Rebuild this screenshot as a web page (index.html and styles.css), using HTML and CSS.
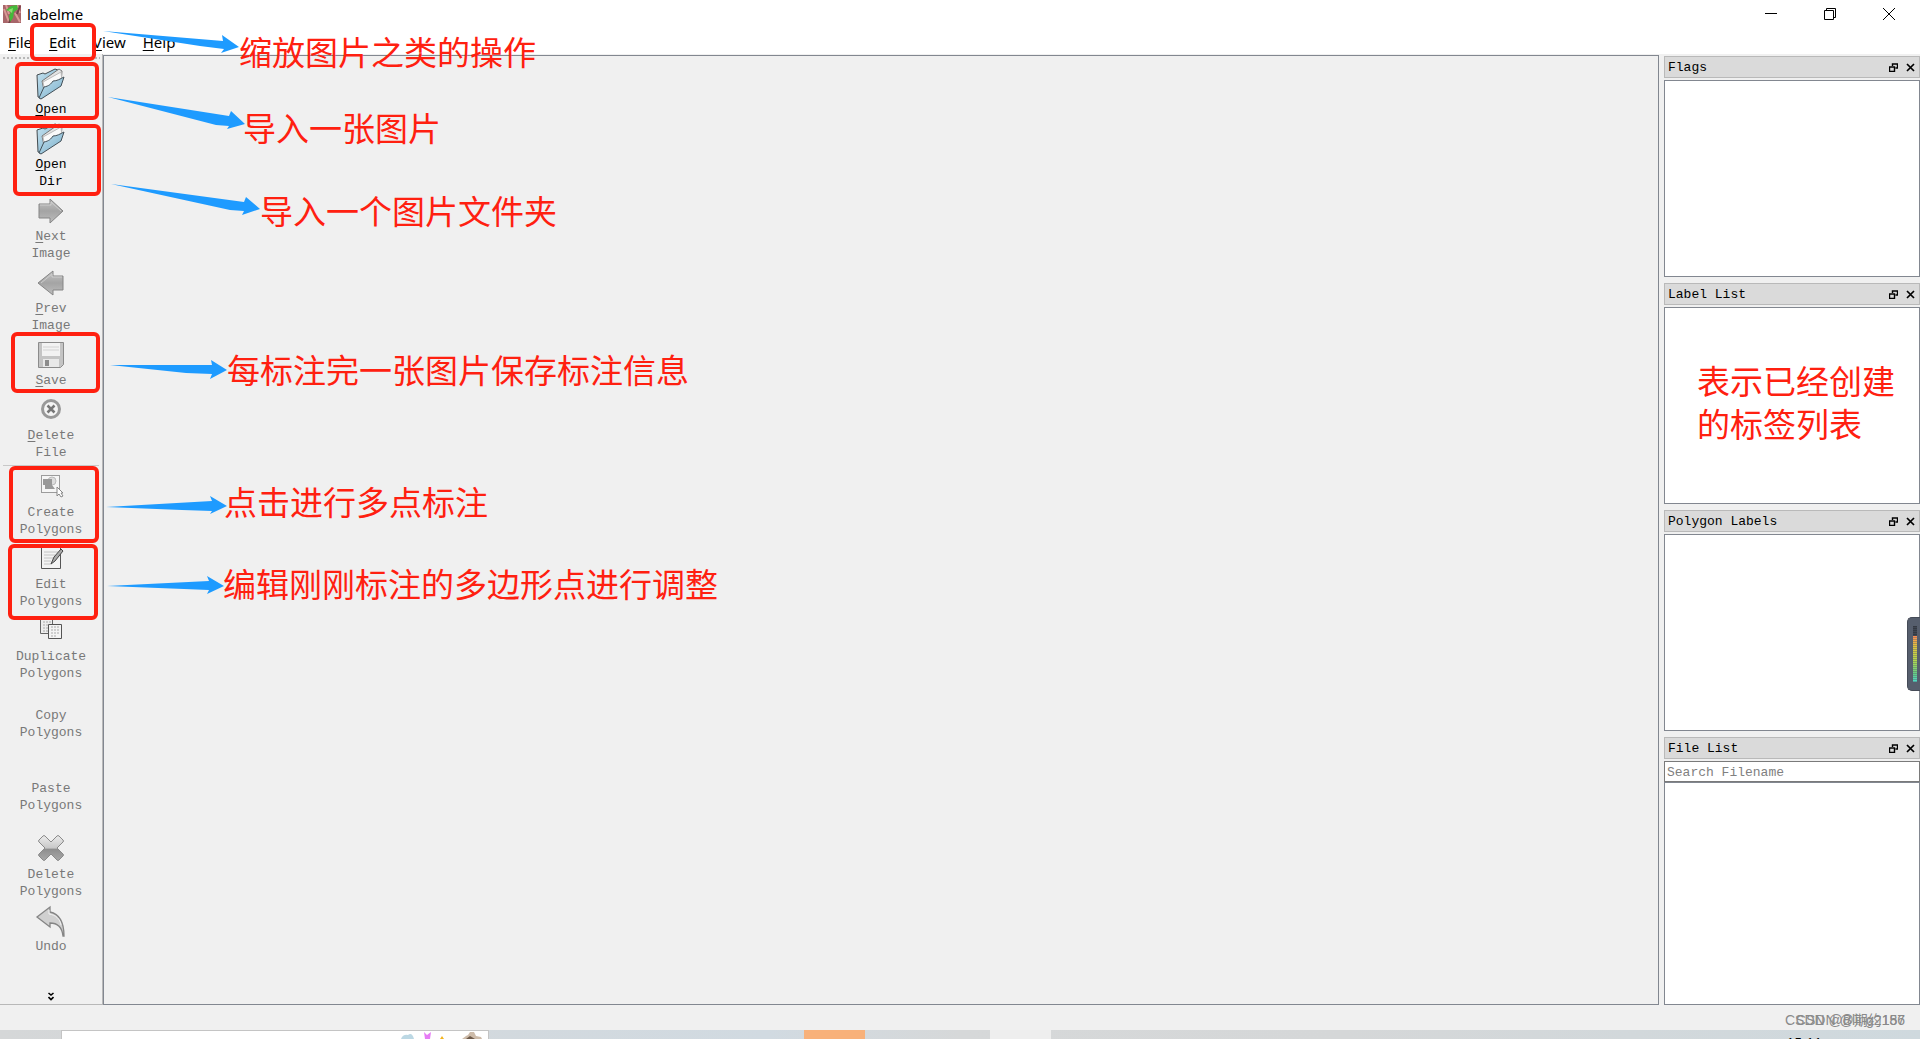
FILE: index.html
```html
<!DOCTYPE html>
<html lang="zh-CN">
<head>
<meta charset="utf-8">
<title>labelme</title>
<link rel="stylesheet" href="styles.css">
</head>
<body>
<svg class="defs" width="0" height="0" aria-hidden="true">
  <defs>
    <linearGradient id="blue" x1="0" y1="0" x2="1" y2="1"><stop offset="0" stop-color="#c9e4f1"/><stop offset="1" stop-color="#74acc8"/></linearGradient>
    <linearGradient id="gray" x1="0" y1="0" x2="0" y2="1"><stop offset="0" stop-color="#c6c6c6"/><stop offset=".5" stop-color="#a4a4a4"/><stop offset="1" stop-color="#bdbdbd"/></linearGradient>
    <linearGradient id="cross" x1="0" y1="0" x2="0" y2="1"><stop offset="0" stop-color="#ececec"/><stop offset=".5" stop-color="#c8c8c8"/><stop offset=".55" stop-color="#8e8e8e"/><stop offset="1" stop-color="#a8a8a8"/></linearGradient>
    <symbol id="folder" viewBox="0 0 32 32">
      <path d="M2 7l6-2 2 1L20 1l3 1-1 15L6 30l-3-1z" fill="url(#blue)" stroke="#444c50"/>
      <path d="M7 13L24 1l3 2-1 13-16 11z" fill="#e4e4e4" stroke="#777"/>
      <path d="M8 14L26 4l1 10-17 11z" fill="#fafafa" stroke="#bbb"/>
      <path d="M9 19c5-1 7-3 9-6 4 0 7-2 11-4l-3 9L6 31l-2-1z" fill="url(#blue)" stroke="#445058"/>
    </symbol>
    <symbol id="win-float" viewBox="0 0 9 9"><path d="M3.500 3V1h5v4H6.500M3 1h6M.5 4h5v4.500h-5zM0 4h6" fill="none" stroke="#000" stroke-width="1.400"/></symbol>
    <symbol id="win-close" viewBox="0 0 9 9"><path d="M1 1l7 7M8 1L1 8" stroke="#000" stroke-width="1.700"/></symbol>
  </defs>
</svg>

<header class="titlebar">
  <svg class="app-icon" viewBox="0 0 18 18"><path fill="#a8666a" d="M0 0h18v18H0z"/><path d="M1 4l5 13M3 0l3 9M12 8l5 9M14 0l3 8" stroke="#d99a95" stroke-width="2"/><path d="M9 10l-3 8M17 1l-3 8" stroke="#74404a" stroke-width="2"/><path d="M3 5l5-4 6-1 1 4-4 3-1 6-3 4-1-6 2-4z" fill="#45b83a"/><path d="M5 5l5-2-1 5z" fill="#8be071"/></svg>
  <span class="app-name">labelme</span>
  <div class="window-buttons">
    <button aria-label="Minimize"><svg viewBox="0 0 12 12"><path d="M0 5.500h12" stroke="#000"/></svg></button>
    <button aria-label="Restore"><svg viewBox="0 0 12 12"><path d="M.5 2.500h9v9h-9zM2.500 2.500v-2h9v9h-2" fill="none" stroke="#000"/></svg></button>
    <button aria-label="Close"><svg viewBox="0 0 12 12"><path d="M0 0l12 12M12 0L0 12" stroke="#000"/></svg></button>
  </div>
</header>

<nav class="menubar">
  <button><u>F</u>ile</button>
  <button><u>E</u>dit</button>
  <button><u>V</u>iew</button>
  <button><u>H</u>elp</button>
</nav>

<main class="workspace">
  <aside class="toolbar">
    <div class="handle"></div>
    <button class="tool"><svg viewBox="0 0 32 32"><use href="#folder"/></svg><span><u>O</u>pen</span></button>
    <button class="tool"><svg viewBox="0 0 32 32"><use href="#folder"/></svg><span><u>O</u>pen<br>Dir</span></button>
    <button class="tool" disabled><svg viewBox="0 0 32 32"><path d="M4 9h11V4l13 12-13 12v-5H4z" fill="url(#gray)" stroke="#858585"/><path d="M5 10h11V7l10 9" fill="none" stroke="#ccc"/></svg><span><u>N</u>ext<br>Image</span></button>
    <button class="tool" disabled><svg viewBox="0 0 32 32"><path d="M28 9H18V4L3 16l15 12v-5h10z" fill="url(#gray)" stroke="#858585"/><path d="M27 10H17V7L6 16" fill="none" stroke="#ccc"/></svg><span><u>P</u>rev<br>Image</span></button>
    <button class="tool" disabled><svg viewBox="0 0 32 32"><path d="M3.500 3.500h25v22l-3 3h-22z" fill="#c4c4c4" stroke="#8b8b8b"/><path d="M7 4h18v13H7z" fill="#f2f2f2"/><path d="M8 8h16M8 11h16" stroke="#d2d2d2"/><path d="M8 20h16v8H8z" fill="#e9e9e9"/><path d="M10 21h4v6h-4z" fill="#8c8c8c"/></svg><span><u>S</u>ave</span></button>
    <button class="tool" disabled><svg viewBox="0 0 32 32"><circle cx="16" cy="15" r="8.500" fill="#f4f4f4" stroke="#999" stroke-width="3"/><path d="M12.500 11.500l7 7M19.500 11.500l-7 7" stroke="#777" stroke-width="2.500"/></svg><span><u>D</u>elete<br>File</span></button>
    <hr>
    <button class="tool" disabled><svg viewBox="0 0 32 32"><path d="M6.500 4.500h18v17h-18z" fill="#f6f6f6" stroke="#444" stroke-dasharray="1 1"/><circle cx="17" cy="10" r="4" fill="#ddd" stroke="#bbb"/><path d="M8 8h9v6l3 4H10v-4H8z" fill="#999"/><path d="M22 16v9l2-2 2 3 2-1-2-3h2z" fill="#fff" stroke="#888"/></svg><span>Create<br>Polygons</span></button>
    <button class="tool" disabled><svg viewBox="0 0 32 32"><path d="M6.500 4.500h19v21h-19z" fill="#f3f3f3" stroke="#555"/><path d="M9 9h14M9 12h11M9 15h9M9 18h7M9 21h7" stroke="#c4c4c4"/><path d="M16 21l3-7 7-8 2 2-8 10z" fill="#aaa" stroke="#444"/></svg><span>Edit<br>Polygons</span></button>
    <button class="tool" disabled><svg viewBox="0 0 32 32"><path d="M5.500 4.500h12v14h-12z" fill="#ededed" stroke="#666"/><path d="M8 7h8M8 10h5M8 13h5M8 16h5" stroke="#aaa" stroke-dasharray="2 1"/><path d="M13.500 9.500h13v14h-13z" fill="#f4f4f4" stroke="#555"/><path d="M16 12h8M16 15h8M16 18h8M16 21h5" stroke="#aaa" stroke-dasharray="2 1"/></svg><span>Duplicate<br>Polygons</span></button>
    <button class="tool text-only" disabled><span>Copy<br>Polygons</span></button>
    <button class="tool text-only" disabled><span>Paste<br>Polygons</span></button>
    <button class="tool" disabled><svg viewBox="0 0 32 32"><path d="M8 3q1-1 2 0l6 6 6-6q1-1 2 0l4 4q1 1 0 2l-6 6 6 6q1 1 0 2l-4 4q-1 1-2 0l-6-6-6 6q-1 1-2 0l-4-4q-1-1 0-2l6-6-6-6q-1-1 0-2z" fill="url(#cross)" stroke="#8a8a8a" stroke-linejoin="round"/></svg><span>Delete<br>Polygons</span></button>
    <button class="tool" disabled><svg viewBox="0 0 32 32"><path d="M15 2v5c9 2 14 9 14 24h-1c-1-9-6-13-13-13v4L2 12z" fill="#d0d0d0" stroke="#858585" stroke-width="1.300"/><path d="M14 5v4c7 1 11 5 12 11" fill="none" stroke="#f2f2f2"/></svg><span>Undo</span></button>
    <button class="more" aria-label="More tools"><svg viewBox="0 0 6 9"><path d="M.5 1L3 3l2.500-2M.5 5L3 7.500 5.500 5" fill="none" stroke="#000" stroke-width="1.600"/></svg></button>
  </aside>

  <section class="canvas" aria-label="Canvas"></section>

  <aside class="docks">
    <section class="dock">
      <header><h2>Flags</h2><button aria-label="Float"><svg viewBox="0 0 9 9"><use href="#win-float"/></svg></button><button aria-label="Close"><svg viewBox="0 0 9 9"><use href="#win-close"/></svg></button></header>
      <div class="list"></div>
    </section>
    <section class="dock">
      <header><h2>Label List</h2><button aria-label="Float"><svg viewBox="0 0 9 9"><use href="#win-float"/></svg></button><button aria-label="Close"><svg viewBox="0 0 9 9"><use href="#win-close"/></svg></button></header>
      <div class="list"><p class="note list-note">表示已经创建<br>的标签列表</p></div>
    </section>
    <section class="dock">
      <header><h2>Polygon Labels</h2><button aria-label="Float"><svg viewBox="0 0 9 9"><use href="#win-float"/></svg></button><button aria-label="Close"><svg viewBox="0 0 9 9"><use href="#win-close"/></svg></button></header>
      <div class="list"><div class="meter"></div></div>
    </section>
    <section class="dock">
      <header><h2>File List</h2><button aria-label="Float"><svg viewBox="0 0 9 9"><use href="#win-float"/></svg></button><button aria-label="Close"><svg viewBox="0 0 9 9"><use href="#win-close"/></svg></button></header>
      <input type="text" placeholder="Search Filename" aria-label="Search Filename">
      <div class="list"></div>
    </section>
  </aside>
</main>

<footer class="statusbar">
  <span class="mark">CSDN @Bling2157</span>
  <span class="mark">CSDN @期约186</span>
</footer>
<div class="taskbar">
  <div class="search-box"><svg viewBox="0 0 90 8"><path d="M3 8q2-5 7-4 4-3 6 4z" fill="#bcd8e4"/><path d="M26 1l3 3 4-3-1 7h-5z" fill="#e67cf5"/><path d="M42 8l2-3 2 3z" fill="#f4b51e"/><path d="M64 8l4-3 2-1 2-3h4l2 4 5 1 1 2z" fill="#cdbba9"/><path d="M68 8l4-3 5 3z" fill="#6d5948"/></svg></div>
  <div class="active-task"></div>
  <div class="pale-task"></div>
  <span class="clock">15:11</span>
</div>

<div class="annotations">
  <svg class="arrows" viewBox="0 0 280 620" width="280" height="620" aria-hidden="true">
    <g fill="#1e9bff">
      <path d="M103 31L223 41 222 35 239 47 221 53 224 49 200 46z"/>
      <path d="M108 97L229 116 231 111 245 124 227 129 229 126 216 125z"/>
      <path d="M111 184L244 202 246 197 260 209 242 215 244 211 230 210z"/>
      <path d="M110 365L212 365 211 360 227 370 210 379 212 374 186 373z"/>
      <path d="M106 507L212 501 210 496 227 506 210 514 212 511 182 510z"/>
      <path d="M107 586L209 581 207 576 224 586 207 594 209 590 184 589z"/>
    </g>
  </svg>
  <div class="box box-menu"></div>
  <div class="box box-open"></div>
  <div class="box box-dir"></div>
  <div class="box box-save"></div>
  <div class="box box-create"></div>
  <div class="box box-edit"></div>
  <p class="note note-menu">缩放图片之类的操作</p>
  <p class="note note-open">导入一张图片</p>
  <p class="note note-dir">导入一个图片文件夹</p>
  <p class="note note-save">每标注完一张图片保存标注信息</p>
  <p class="note note-create">点击进行多点标注</p>
  <p class="note note-edit">编辑刚刚标注的多边形点进行调整</p>
</div>
</body>
</html>
```
FILE: styles.css
```css
* { box-sizing: border-box; }

body {
  margin: 0;
  min-height: 100vh;
  display: flex;
  flex-direction: column;
  position: relative;
  overflow-x: hidden;
  background: #f0f0f0;
  color: #000;
  font: 15px/20px "Noto Sans", "Noto Sans CJK SC", sans-serif;
}

button {
  border: 0;
  padding: 0;
  background: none;
  color: inherit;
  font: inherit;
}

svg { display: block; }
.defs { position: absolute; }

/* Title bar and menu */
.titlebar {
  display: flex;
  align-items: center;
  height: 28px;
  padding-left: 3px;
  background: #fff;
}
.app-icon { width: 18px; height: 18px; }
.app-name { margin-left: 6px; }
.window-buttons { display: flex; margin-left: auto; padding-right: 2px; }
.window-buttons button { width: 59px; height: 28px; display: grid; place-items: center; }
.window-buttons svg { width: 12px; height: 12px; }

.menubar {
  display: flex;
  gap: 17px;
  height: 26px;
  padding: 4px 8px;
  background: #fff;
}
.menubar button { line-height: 20px; }
u { text-underline-offset: 2px; text-decoration-thickness: 1px; text-decoration-skip-ink: none; }

/* Work area */
.workspace { flex: 1; display: flex; min-height: 0; }

.toolbar {
  display: flex;
  flex-direction: column;
  width: 103px;
  border-right: 1px solid #b8b8b8;
  border-bottom: 1px solid #b8b8b8;
  font: 13px/17px "Liberation Mono", monospace;
}
.handle {
  height: 11px;
  margin: 0 2px;
  background: radial-gradient(circle, #b8b8b8 1px, transparent 1px) 0 2px / 4px 4px repeat-x;
}
.tool {
  display: flex;
  flex-direction: column;
  align-items: center;
  min-height: 55px;
  padding: 3px 0 2px;
}
.tool svg { width: 32px; height: 32px; margin-bottom: 1px; }
.tool:disabled { color: #787878; }
.text-only { min-height: 73px; padding-top: 23px; }
.toolbar hr { width: calc(100% - 6px); height: 1px; margin: 2px 3px; border: 0; background: #c8c8c8; }
.more { margin-top: auto; padding: 3px; align-self: center; }
.more svg { width: 6px; height: 9px; }

.canvas { flex: 1; margin-top: 1px; border: 1px solid #828790; }

/* Docks */
.docks {
  display: grid;
  grid-template-rows: 221fr 221fr 221fr 268fr;
  gap: 6px;
  width: 261px;
  padding: 2px 0 0 5px;
}
.dock {
  display: flex;
  flex-direction: column;
  font: 13px/18px "Liberation Mono", monospace;
}
.dock header {
  display: flex;
  align-items: center;
  gap: 8px;
  height: 22px;
  margin-bottom: 2px;
  padding: 0 4px 0 3px;
  border: 1px solid #b9b9b9;
  background: #dadada;
}
.dock h2 { flex: 1; margin: 0; padding-top: 2px; font: inherit; }
.dock header svg { width: 9px; height: 9px; }
.list { flex: 1; position: relative; border: 1px solid #828790; background: #fff; }
.dock input {
  width: 100%;
  height: 21px;
  padding: 1px 2px 0;
  border: 1px solid #7a7a7a;
  border-radius: 0;
  background: #fff;
  font: inherit;
}
.dock input::placeholder { color: #808080; opacity: 1; }

.meter {
  position: absolute;
  top: 82px;
  right: -1px;
  width: 13px;
  height: 74px;
  padding: 8px 3px 8px 5px;
  border: 1px solid #454b57;
  border-right: 0;
  border-radius: 5px 0 0 5px;
  background:
    repeating-linear-gradient(transparent 0 1px, #535b6966 1px 2px) content-box,
    linear-gradient(#343943 0 10px, #ff8c54 10px, #e3c43d 20px, #b5d84b 34px, #63cf87 48px, #4ddccb) content-box,
    #565e6d;
}

/* Bottom edge */
.statusbar { position: relative; height: 25px; }
.mark {
  position: absolute;
  top: 6px;
  right: 15px;
  color: #8a8a8a;
  font: 14px/18px "Liberation Sans", "Noto Sans CJK SC", sans-serif;
  white-space: nowrap;
}

.taskbar {
  display: grid;
  grid-template-columns: 61px 428px 315px 61px 125px 61px 1fr;
  height: 9px;
  overflow: hidden;
  background: linear-gradient(90deg, #d5d7d8, #d1dae1 40%, #d6d8d9 50%, #d5d7d8 70%, #cfd9de);
}
.search-box { grid-column: 2; display: flex; justify-content: flex-end; border: 1px solid #c4c4c4; border-bottom: 0; background: #fff; }
.search-box svg { width: 90px; height: 8px; }
.active-task { grid-column: 4; background: #f8b17a; }
.pale-task { grid-column: 6; background: #eee; }
.clock { grid-column: 7; justify-self: end; margin-right: 98px; padding-top: 3px; font-size: 14px; }

/* Callouts over the window */
.annotations { position: absolute; top: 0; left: 0; pointer-events: none; }
.arrows { position: absolute; top: 0; left: 0; }
.box { position: absolute; border: 4px solid #ff2010; border-radius: 6px; }
.box-menu { left: 30px; top: 23px; width: 66px; height: 38px; }
.box-open { left: 15px; top: 62px; width: 84px; height: 58px; }
.box-dir { left: 13px; top: 124px; width: 88px; height: 72px; }
.box-save { left: 11px; top: 332px; width: 89px; height: 61px; }
.box-create { left: 9px; top: 466px; width: 90px; height: 77px; }
.box-edit { left: 8px; top: 544px; width: 90px; height: 76px; }

.note {
  position: absolute;
  margin: 0;
  color: #ff2010;
  font: 400 33px/43px "Noto Sans CJK SC", sans-serif;
  white-space: nowrap;
}
.note-menu { left: 239px; top: 30px; }
.note-open { left: 243px; top: 106px; }
.note-dir { left: 260px; top: 189px; }
.note-save { left: 227px; top: 348px; }
.note-create { left: 224px; top: 480px; }
.note-edit { left: 223px; top: 562px; }
.list-note { left: 32px; top: 51px; }
```
